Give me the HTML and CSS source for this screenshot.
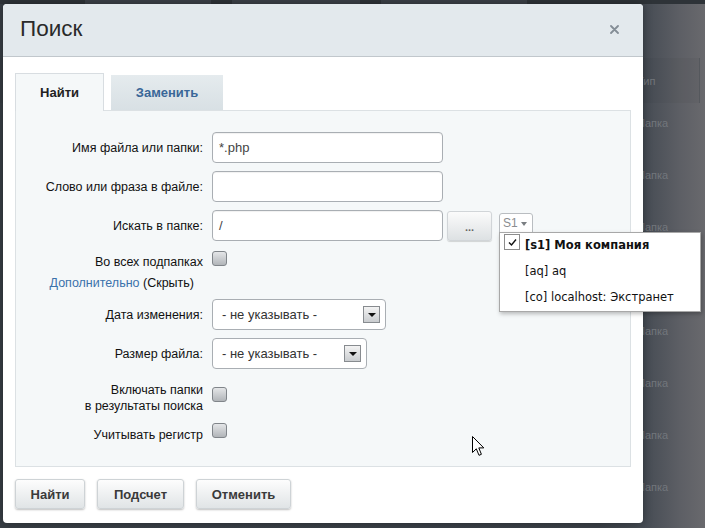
FILE: index.html
```html
<!DOCTYPE html>
<html lang="ru">
<head>
<meta charset="utf-8">
<title>Поиск</title>
<link rel="stylesheet" href="styles.css">
</head>
<body>
<div class="page">
  <div class="page-tabs"><span class="pt pt1"></span><span class="pt pt2"></span><span class="pt pt3"></span></div>
  <div class="grid">
    <div class="grid-head"><span class="cell">Тип</span></div>
    <div class="grid-row"><span class="cell">Папка</span></div>
    <div class="grid-row"><span class="cell">Папка</span></div>
    <div class="grid-row"><span class="cell">Папка</span></div>
    <div class="grid-row"><span class="cell">Папка</span></div>
    <div class="grid-row"><span class="cell">Папка</span></div>
    <div class="grid-row"><span class="cell">Папка</span></div>
    <div class="grid-row"><span class="cell">Папка</span></div>
    <div class="grid-row"><span class="cell">Папка</span></div>
  </div>
</div>

<div class="dialog">
  <div class="dlg-head">
    <span class="dlg-title">Поиск</span>
    <span class="dlg-close"><svg width="9" height="9" viewBox="0 0 9 9"><path d="M1 1L8 8M8 1L1 8" stroke="#848d96" stroke-width="1.8" stroke-linecap="round"/></svg></span>
  </div>
  <div class="dlg-body">
    <div class="tabs">
      <div class="tab tab-active">Найти</div>
      <div class="tab tab-inactive">Заменить</div>
    </div>
    <div class="panel">
      <div class="row row-input first">
        <div class="lbl">Имя файла или папки:</div>
        <div class="input">*.php</div>
      </div>
      <div class="row row-input">
        <div class="lbl">Слово или фраза в файле:</div>
        <div class="input"></div>
      </div>
      <div class="row row-input">
        <div class="lbl">Искать в папке:</div>
        <div class="fld-group">
          <div class="input">/</div>
          <div class="dots">...</div>
          <div class="s1">S1<span class="s1-arrow"></span>
            <div class="popup">
              <div class="pi pi-bold"><span class="pcb"><svg width="13" height="13" viewBox="0 0 13 13"><path d="M3 6.5L5.5 9L10 3.5" fill="none" stroke="#111" stroke-width="1.4"/></svg></span>[s1] Моя компания</div>
              <div class="pi">[aq] aq</div>
              <div class="pi">[co] localhost: Экстранет</div>
            </div>
          </div>
        </div>
      </div>
      <div class="row row-check r-sub">
        <div class="lbl">Во всех подпапках</div>
        <span class="cb"></span>
      </div>
      <div class="row r-link">
        <div class="lbl lbl-link"><span class="link">Дополнительно</span> (Скрыть)</div>
      </div>
      <div class="row row-input r-date">
        <div class="lbl">Дата изменения:</div>
        <div class="select sel-date"><span>- не указывать -</span><span class="sel-arrow"></span></div>
      </div>
      <div class="row row-input">
        <div class="lbl">Размер файла:</div>
        <div class="select sel-size"><span>- не указывать -</span><span class="sel-arrow"></span></div>
      </div>
      <div class="row row-check r-folders">
        <div class="lbl">Включать папки<br>в результаты поиска</div>
        <span class="cb"></span>
      </div>
      <div class="row row-check r-case">
        <div class="lbl">Учитывать регистр</div>
        <span class="cb"></span>
      </div>
    </div>
    <div class="buttons">
      <div class="btn b1">Найти</div>
      <div class="btn b2">Подсчет</div>
      <div class="btn b3">Отменить</div>
    </div>
  </div>
</div>

<svg class="cursor" width="13" height="21" viewBox="0 0 13 21"><path d="M0.5 0.5L0.5 16.5L4.3 12.8L7 19.3L9.4 18.3L6.8 11.9L11.8 11.9Z" fill="#fff" stroke="#000" stroke-width="1"/></svg>
</body>
</html>
```

FILE: styles.css
```css
* { box-sizing: border-box; }
html, body { margin: 0; padding: 0; }
body {
  width: 705px;
  height: 528px;
  overflow: hidden;
  position: relative;
  font-family: "Liberation Sans", Arial, sans-serif;
  background: linear-gradient(to right, #383e45 0, #3b4148 600px, #454b53 643px, #5d5f65 680px, #69696d 705px);
}

/* background page */
.page-tabs { display: flex; height: 4px; background: #2e3338; padding-left: 85px; gap: 21px; }
.pt { height: 4px; background: #3c4148; }
.pt1 { width: 126px; }
.pt2 { width: 128px; }
.pt3 { width: 146px; }
.grid-head {
  margin-top: 54px;
  height: 45px;
  width: 700px;
  border-right: 1px solid #55585d;
  background: rgba(0, 0, 0, 0.03);
  padding-top: 16px;
  font-size: 11px;
  line-height: 14px;
  color: #72767c;
}
.grid-row {
  height: 52px;
  padding-top: 13px;
  font-size: 11px;
  line-height: 14px;
  color: #72767c;
}
.cell { display: block; padding-left: 637px; white-space: nowrap; }

/* dialog */
.dialog {
  position: absolute;
  left: 3px;
  top: 4px;
  width: 640px;
  height: 519px;
  background: #fff;
  border-radius: 4px;
  box-shadow: 0 0 10px rgba(0, 0, 0, 0.35);
  display: flex;
  flex-direction: column;
}
.dlg-head {
  flex: none;
  height: 53px;
  background: #e3e9ed;
  border-bottom: 1px solid #c1c7cc;
  border-radius: 4px 4px 0 0;
  display: flex;
  align-items: center;
  justify-content: space-between;
  padding: 0 24px 2px 17px;
}
.dlg-title { font-size: 22.5px; color: #2a2a2a; }
.dlg-close { display: flex; }
.dlg-body { padding: 16px 12px 0 12px; }

.tabs { display: flex; align-items: flex-end; gap: 7px; height: 37px; }
.tab {
  display: flex;
  align-items: center;
  justify-content: center;
  font-size: 13px;
  font-weight: bold;
}
.tab-active {
  width: 89px;
  height: 38px;
  margin-bottom: -1px;
  background: #f5f8f9;
  border: 1px solid #d8dde1;
  border-bottom: none;
  color: #222;
  position: relative;
  z-index: 1;
}
.tab-inactive {
  width: 112px;
  height: 35px;
  background: linear-gradient(#e5ebee, #d8e0e4);
  color: #3a6798;
}

.panel {
  height: 357px;
  background: #f5f8f9;
  border: 1px solid #dce1e4;
  padding-top: 21px;
}
.row { display: flex; gap: 9px; }
.lbl {
  flex: none;
  width: 187px;
  text-align: right;
  font-size: 12.5px;
  line-height: 16px;
  color: #111;
}
.row-input { align-items: center; height: 31px; margin-top: 8px; }
.row-input.first { margin-top: 0; }
.row-check { align-items: flex-start; }

.input {
  width: 231px;
  height: 31px;
  flex: none;
  background: #fff;
  border: 1px solid #a9aeb3;
  border-radius: 4px;
  box-shadow: inset 0 1px 1px rgba(0, 0, 0, 0.06);
  font-size: 13px;
  line-height: 29px;
  color: #444;
  padding-left: 6px;
}
.fld-group { display: flex; align-items: flex-start; }
.dots {
  width: 45px;
  height: 30px;
  margin-left: 4px;
  margin-top: 1px;
  border: 1px solid #d1d5d8;
  border-radius: 3px;
  background: linear-gradient(#fbfbfb, #dde1e3);
  box-shadow: 0 1px 1px rgba(0, 0, 0, 0.15);
  font-size: 11px;
  font-weight: bold;
  color: #666;
  text-align: center;
  line-height: 30px;
}
.s1 {
  position: relative;
  width: 34px;
  height: 22px;
  margin-left: 7px;
  margin-top: 3px;
  background: #fff;
  border: 1px solid #b9bdc1;
  border-radius: 3px;
  font-size: 12px;
  line-height: 19px;
  color: #8a8d90;
  padding-left: 3px;
}
.s1-arrow {
  position: absolute;
  left: 21px;
  top: 8px;
  width: 0;
  height: 0;
  border-left: 3.5px solid transparent;
  border-right: 3.5px solid transparent;
  border-top: 4px solid #7a7e82;
}
.popup {
  position: absolute;
  left: -1px;
  top: 18px;
  width: 202px;
  height: 80px;
  background: #fff;
  border: 1px solid #a8a8a8;
  box-shadow: 1px 2px 4px rgba(0, 0, 0, 0.25);
  z-index: 5;
}
.pi {
  position: relative;
  height: 26px;
  line-height: 26px;
  padding-left: 25px;
  font-family: "DejaVu Sans", Verdana, sans-serif;
  font-size: 11.5px;
  color: #111;
  white-space: nowrap;
}
.pi-bold { font-weight: bold; line-height: 24px; height: 25px; }
.pcb {
  position: absolute;
  left: 4px;
  top: 1px;
  width: 16px;
  height: 16px;
  border: 1px solid #8c8c8c;
  background: #fff;
  display: flex;
  align-items: center;
  justify-content: center;
}

.cb {
  flex: none;
  width: 15px;
  height: 15px;
  border: 1px solid #80858a;
  border-radius: 3px;
  background: linear-gradient(#e4e6e8, #b1b5b9);
}
.r-sub { margin-top: 10px; }
.r-sub .lbl { padding-top: 3px; }
.r-link { margin-top: 5px; }
.lbl-link { padding-right: 9px; }
.link { color: #3b72ab; }
.r-date { margin-top: 8px; }
.select {
  height: 31px;
  flex: none;
  background: #fff;
  border: 1px solid #a9aeb3;
  border-radius: 4px;
  display: flex;
  align-items: center;
  justify-content: space-between;
  padding: 0 5px 0 9px;
  font-size: 13px;
  color: #333;
}
.sel-date { width: 174px; }
.sel-size { width: 155px; }
.sel-arrow {
  width: 17px;
  height: 17px;
  border: 1px solid #878b8f;
  background: linear-gradient(#f3f3f3, #c9cccf);
  display: flex;
  align-items: center;
  justify-content: center;
}
.sel-arrow::after {
  content: "";
  width: 0;
  height: 0;
  border-left: 4px solid transparent;
  border-right: 4px solid transparent;
  border-top: 4px solid #111;
}
.r-folders { margin-top: 13px; }
.r-folders .cb { margin-top: 5px; }
.r-case { margin-top: 9px; }
.r-case .lbl { padding-top: 4px; }

.buttons { display: flex; gap: 12px; margin-top: 12px; }
.btn {
  height: 30px;
  border: 1px solid #ced3d6;
  border-radius: 3px;
  background: linear-gradient(#fdfdfd, #e0e4e6);
  box-shadow: 0 1px 2px rgba(0, 0, 0, 0.25);
  font-size: 13px;
  font-weight: bold;
  color: #3a3a3a;
  display: flex;
  align-items: center;
  justify-content: center;
}
.b1 { width: 70px; }
.b2 { width: 87px; }
.b3 { width: 95px; }

.cursor { position: absolute; left: 472px; top: 436px; }
```
